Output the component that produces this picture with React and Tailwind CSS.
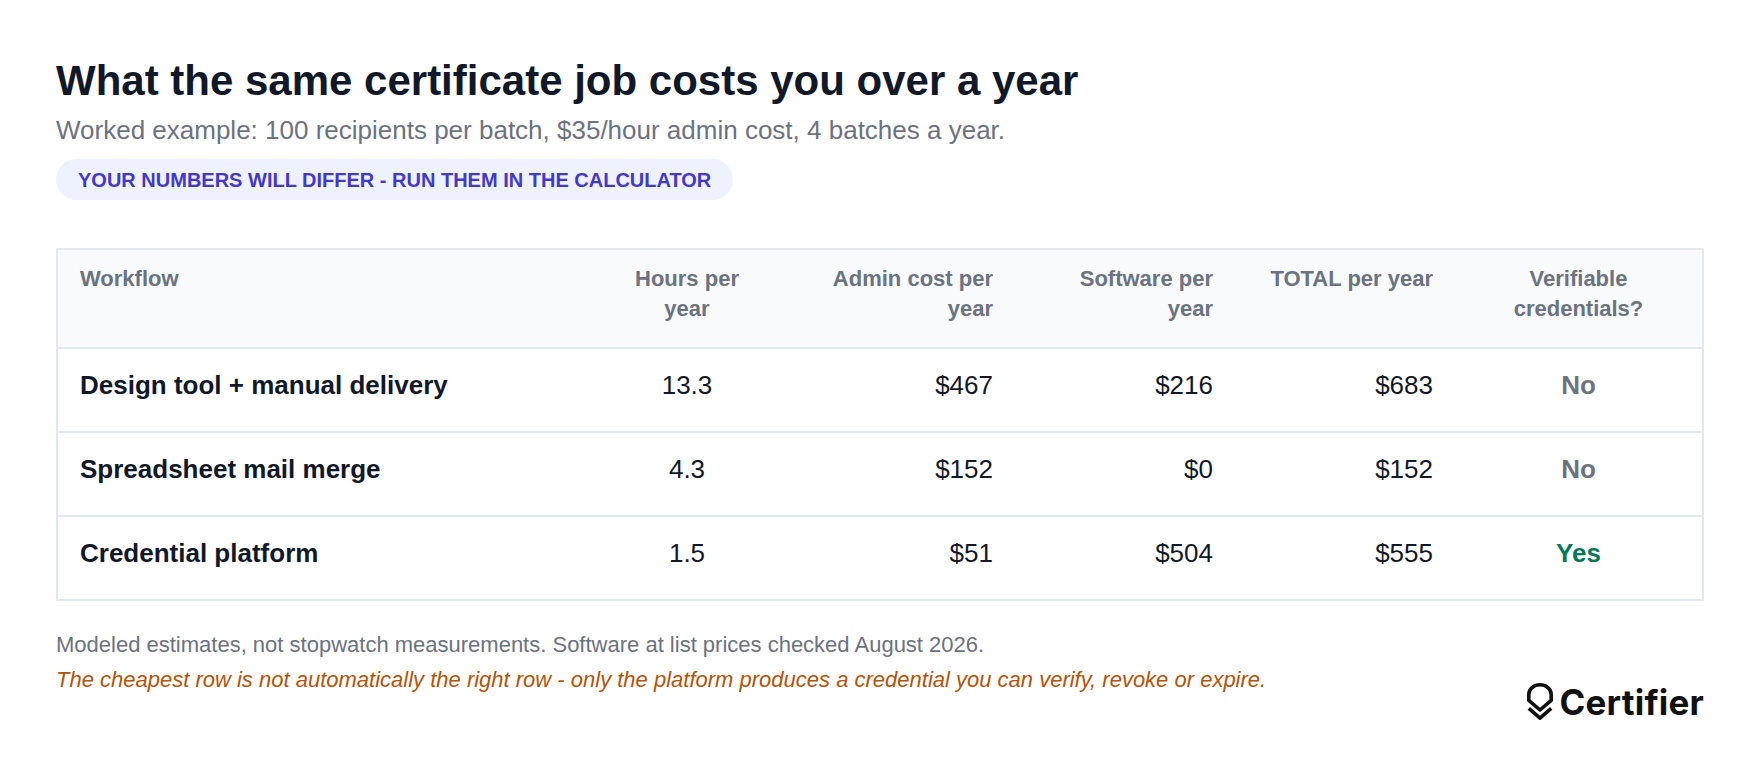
const rows = [
  { name: 'Design tool + manual delivery', hours: '13.3', admin: '$467', software: '$216', total: '$683', verifiable: false },
  { name: 'Spreadsheet mail merge', hours: '4.3', admin: '$152', software: '$0', total: '$152', verifiable: false },
  { name: 'Credential platform', hours: '1.5', admin: '$51', software: '$504', total: '$555', verifiable: true },
];

function CertifierLogo() {
  return (
    <div className="flex items-center gap-[6px]">
      <svg width="26" height="39" viewBox="0 0 26 39" fill="none" stroke="#111111" strokeWidth="3.6" strokeLinejoin="round">
        <path d="M13 1.8 C6.7 1.8 1.8 6 1.8 11.4 V17.4 L13 27 L24.2 17.4 V11.4 C24.2 6 19.3 1.8 13 1.8 Z" />
        <path d="M1.8 25.4 L13 35.2 L24.2 25.4" />
      </svg>
      <span className="text-[35px] font-bold tracking-[0.2px] text-[#111111] leading-none font-['Inter',sans-serif]">
        Certifier
      </span>
    </div>
  );
}

export default function App() {
  return (
    <div className="w-[1760px] h-[764px] bg-white px-14 pt-[57px] font-['Liberation_Sans',Arial,sans-serif]">
      <h1 className="text-[42px] leading-[48px] font-bold text-[#111827]">
        What the same certificate job costs you over a year
      </h1>
      <p className="mt-[9px] text-[26px] leading-[32px] text-[#6b7280]">
        Worked example: 100 recipients per batch, $35/hour admin cost, 4 batches a year.
      </p>
      <div className="mt-[13px] inline-flex items-center h-[41px] px-[22px] pt-[1px] rounded-full bg-[#eef2ff] text-[20px] font-bold text-[#4338ca] uppercase">
        Your numbers will differ - run them in the calculator
      </div>

      <table className="mt-12 w-full table-fixed border-collapse border-2 border-[#e2e8f0]">
        <colgroup>
          <col className="w-[535px]" />
          <col className="w-[190px]" />
          <col className="w-[233px]" />
          <col className="w-[220px]" />
          <col className="w-[220px]" />
          <col />
        </colgroup>
        <thead>
          <tr className="bg-[#f8fafc] text-[22px] leading-[30px] text-[#6b7280] align-top">
            <th className="h-[99px] px-[22px] pt-[14px] text-left font-bold">Workflow</th>
            <th className="px-[22px] pt-[14px] text-center font-bold">Hours per year</th>
            <th className="px-[22px] pt-[14px] text-right font-bold">Admin cost per year</th>
            <th className="px-[22px] pt-[14px] text-right font-bold">Software per year</th>
            <th className="px-[22px] pt-[14px] text-right font-bold">TOTAL per year</th>
            <th className="px-[22px] pt-[14px] text-center font-bold">Verifiable credentials?</th>
          </tr>
        </thead>
        <tbody>
          {rows.map(r => (
            <tr key={r.name} className="border-t-2 border-[#e2e8f0] text-[26px] text-[#111827]">
              <td className="h-[84px] px-[22px] pb-[9px] font-bold">{r.name}</td>
              <td className="px-[22px] pb-[9px] text-center">{r.hours}</td>
              <td className="px-[22px] pb-[9px] text-right">{r.admin}</td>
              <td className="px-[22px] pb-[9px] text-right">{r.software}</td>
              <td className="px-[22px] pb-[9px] text-right">{r.total}</td>
              <td className={`px-[22px] pb-[9px] text-center font-bold ${r.verifiable ? 'text-[#047857]' : 'text-[#6b7280]'}`}>
                {r.verifiable ? 'Yes' : 'No'}
              </td>
            </tr>
          ))}
        </tbody>
      </table>

      <div className="mt-[29px] flex items-start justify-between">
        <div className="text-[22px] leading-[30px]">
          <p className="text-[#6b7280]">
            Modeled estimates, not stopwatch measurements. Software at list prices checked August 2026.
          </p>
          <p className="mt-[5px] italic text-[#b45309]">
            The cheapest row is not automatically the right row - only the platform produces a credential you can verify, revoke or expire.
          </p>
        </div>
        <div className="mt-[53px]">
          <CertifierLogo />
        </div>
      </div>
    </div>
  );
}
